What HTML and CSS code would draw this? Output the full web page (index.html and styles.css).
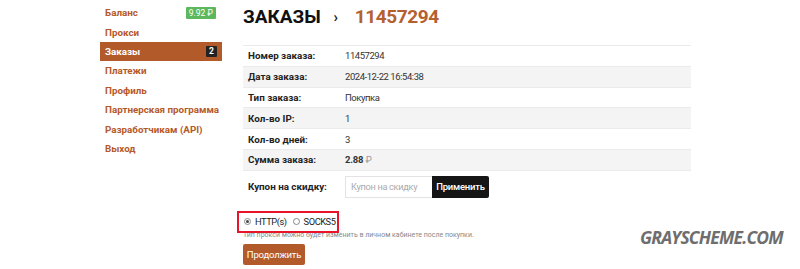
FILE: index.html
```html
<!DOCTYPE html>
<html lang="ru">
<head>
<meta charset="utf-8">
<link rel="stylesheet" href="styles.css">
</head>
<body>
<div class="page">
  <nav class="side">
    <a class="item">Баланс <span class="bal">9.92 ₽</span></a>
    <a class="item">Прокси</a>
    <a class="item active">Заказы <span class="cnt">2</span></a>
    <a class="item">Платежи</a>
    <a class="item">Профиль</a>
    <a class="item">Партнерская программа</a>
    <a class="item">Разработчикам (API)</a>
    <a class="item">Выход</a>
  </nav>
  <main class="main">
    <h1 class="title">ЗАКАЗЫ <span class="sep">›</span> <span class="num">11457294</span></h1>
    <div class="table">
      <div class="row"><div class="lbl">Номер заказа:</div><div class="val">11457294</div></div>
      <div class="row alt"><div class="lbl">Дата заказа:</div><div class="val">2024-12-22 16:54:38</div></div>
      <div class="row"><div class="lbl">Тип заказа:</div><div class="val">Покупка</div></div>
      <div class="row alt"><div class="lbl">Кол-во IP:</div><div class="val">1</div></div>
      <div class="row"><div class="lbl">Кол-во дней:</div><div class="val">3</div></div>
      <div class="row alt"><div class="lbl">Сумма заказа:</div><div class="val strong">2.88 <span class="rub">₽</span></div></div>
    </div>
    <div class="coupon">
      <div class="lbl">Купон на скидку:</div>
      <div class="cgroup"><input class="cin" placeholder="Купон на скидку"><button class="cbtn">Применить</button></div>
    </div>
    <div class="radios">
      <label class="r"><span class="dot on"></span>HTTP(s)</label>
      <label class="r"><span class="dot"></span>SOCKS5</label>
    </div>
    <div class="help">Тип прокси можно будет изменить в личном кабинете после покупки.</div>
    <button class="go">Продолжить</button>
  </main>
  <div class="wm">GRAYSCHEME.COM</div>
</div>
</body>
</html>
```
FILE: styles.css
```css
* { box-sizing: border-box; }
html, body { margin: 0; padding: 0; background: #fff; }
body { font-family: Roboto, "Noto Sans", sans-serif; color: #222; width: 800px; height: 269px; overflow: hidden; }
.page { display: flex; padding-left: 100px; gap: 21px; position: relative; height: 269px; }
.side { width: 122px; padding-top: 3px; display: flex; flex-direction: column; flex-shrink: 0; }
.item { height: 19.4px; display: flex; align-items: center; justify-content: space-between; padding: 0 5px 0 5px; font-size: 9.8px; font-weight: 700; color: #b5592a; text-decoration: none; white-space: nowrap; }
.item.active { background: #b35a2b; color: #fff; }
.bal { background: #5cb85c; color: #fff; font-weight: 400; font-size: 8.5px; padding: 1px 3px; line-height: 10px; border-radius: 1px; margin-right: 1px; }
.cnt { background: #222; color: #fff; font-size: 8.5px; padding: 0 3px; line-height: 11px; border-radius: 1px; }
.main { width: 448px; flex-shrink: 0; }
.title { margin: 4px 0 0; font-size: 19px; font-weight: 700; color: #111; line-height: 26px; height: 41px; white-space: nowrap; }
.sep { color: #222; font-weight: 700; font-size: 15px; margin: 0 12px 0 8px; position: relative; top: -1px; }
.num { color: #b5602f; letter-spacing: -0.4px; }
.table { border-top: 1px solid #ebebeb; }
.row { display: flex; height: 20.8px; align-items: center; border-bottom: 1px solid #ebebeb; }
.row.alt { background: #f4f4f4; }
.lbl { width: 102px; padding-left: 5px; font-weight: 700; color: #222; font-size: 9.8px; white-space: nowrap; }
.val { color: #333; font-size: 9.5px; letter-spacing: -0.45px; }
.val.strong { font-weight: 700; letter-spacing: -0.2px; }
.rub { color: #999; font-weight: 400; }
.coupon { display: flex; align-items: center; margin-top: 5px; height: 22px; }
.cgroup { display: flex; }
.cin { width: 87px; height: 22px; border: 1px solid #e3e3e3; border-right: 0; padding: 0 5px; font-family: inherit; font-size: 9.2px; letter-spacing: -0.3px; color: #999; outline: none; }
.cin::placeholder { color: #aaa; }
.cbtn { height: 22px; width: 57px; background: #151515; color: #fff; border: 0; font-family: inherit; font-size: 9.5px; font-weight: 500; padding: 0; border-radius: 0 2px 2px 0; letter-spacing: -0.2px; }
.radios { position: relative; z-index: 1; margin: 13px 0 0 -6px; width: 102px; height: 22px; border: 2px solid #e8142b; display: flex; align-items: center; gap: 6px; padding-left: 5px; font-size: 9.3px; letter-spacing: -0.45px; color: #222; white-space: nowrap; }
.r { display: flex; align-items: center; gap: 4px; }
.dot { width: 7px; height: 7px; border: 1px solid #888; border-radius: 50%; display: inline-flex; align-items: center; justify-content: center; background: #fff; }
.dot.on::after { content: ""; width: 3px; height: 3px; border-radius: 50%; background: #444; }
.help { font-size: 7px; color: #888; margin-top: -3px; line-height: 10px; white-space: nowrap; }
.go { margin-top: 4px; height: 21px; width: 62px; background: #b35a2b; color: #fff; border: 0; border-radius: 2px; font-family: inherit; font-size: 9.5px; padding: 0; letter-spacing: -0.2px; }
.wm { position: absolute; left: 640px; top: 225px; font-family: "Open Sans", sans-serif; font-style: italic; font-weight: 700; font-size: 17.5px; letter-spacing: -0.8px; color: #6e6e6e; }
```
